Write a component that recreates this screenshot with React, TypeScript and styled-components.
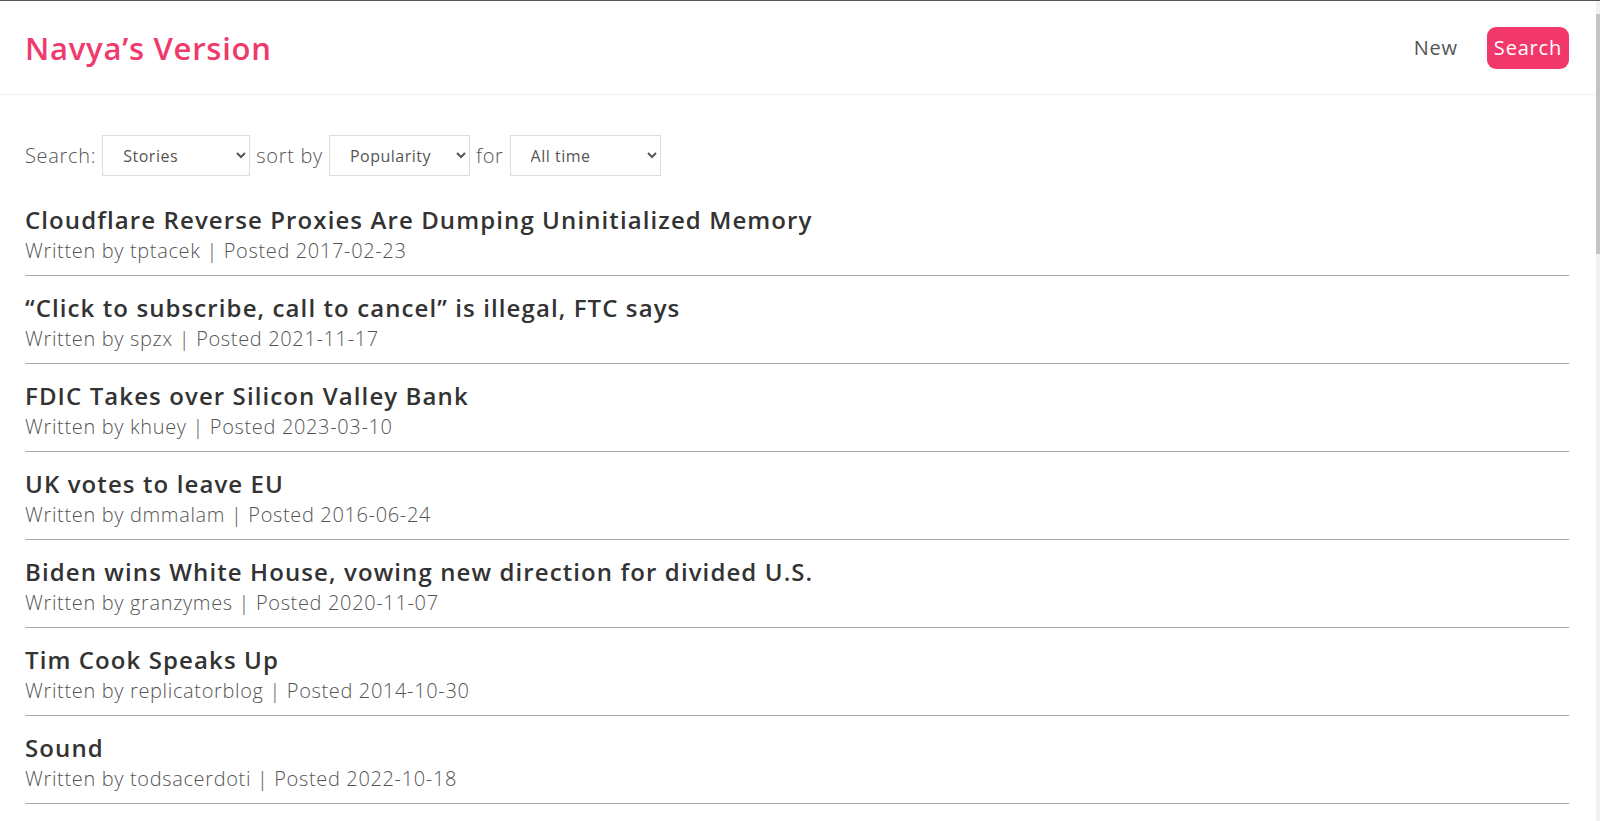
import React from 'react';
import styled, { createGlobalStyle } from 'styled-components';

const GlobalStyle = createGlobalStyle`
  html, body {
    margin: 0;
    padding: 0;
    background: #ffffff;
    font-family: "Open Sans", Lato, sans-serif;
  }

  body {
    border-top: 1px solid #555;
  }
`;

// thin scrollbar strip seen on the right edge of the screenshot
const ScrollTrack = styled.div`
  position: fixed;
  top: 1px;
  right: 0;
  bottom: 0;
  width: 4px;
  background: #f1f1f1;
`;

const ScrollThumb = styled.div`
  margin-top: 13px;
  height: 240px;
  background: #c4c4c4;
`;

const Header = styled.header`
  display: flex;
  align-items: center;
  justify-content: space-between;
  height: 93px;
  padding: 0 27px 0 25px;
  margin-right: 4px;
  border-bottom: 1px solid #f0f0f0;
`;

const Brand = styled.h1`
  margin: 0;
  font-size: 31px;
  font-weight: 600;
  letter-spacing: 0.75px;
  color: #ef3a6c;
`;

const Nav = styled.nav`
  display: flex;
  align-items: center;
  gap: 29px;
`;

const NavLink = styled.a<{ $active?: boolean }>`
  font-size: 20px;
  line-height: 42px;
  letter-spacing: 0.8px;
  padding: 0 ${(p) => (p.$active ? '7px' : '0')};
  border-radius: 9px;
  color: ${(p) => (p.$active ? '#ffffff' : '#555555')};
  background: ${(p) => (p.$active ? '#f2386b' : 'transparent')};
  text-decoration: none;
  cursor: pointer;
`;

const Main = styled.main`
  padding: 40px 31px 0 25px;
`;

const Filters = styled.div`
  display: flex;
  align-items: center;
  gap: 6px;
  height: 41px;
  margin-bottom: 12px;
  font-size: 20px;
  font-weight: 300;
  letter-spacing: 0.7px;
  color: #555;
`;

const Select = styled.select<{ $w: number }>`
  width: ${(p) => p.$w}px;
  height: 41px;
  padding: 0 8px 0 16px;
  font-family: "Open Sans", Lato, sans-serif;
  font-size: 16px;
  letter-spacing: 0.5px;
  color: #555;
  background: #fff;
  border: 1px solid #dddddd;
  border-radius: 0;
  outline: none;
`;

const List = styled.ul`
  list-style: none;
  margin: 0;
  padding: 0;
`;

const Item = styled.li`
  padding: 17px 0 10px;
  border-bottom: 1px solid #aaaaaa;
`;

const Title = styled.a`
  display: block;
  font-size: 24px;
  line-height: 30px;
  font-weight: 600;
  letter-spacing: 1.1px;
  color: #333;
  text-decoration: none;
`;

const Meta = styled.div`
  margin-top: 2px;
  font-size: 20px;
  line-height: 28px;
  font-weight: 300;
  letter-spacing: 0.65px;
  color: #555;
`;

const stories = [
  ['Cloudflare Reverse Proxies Are Dumping Uninitialized Memory', 'tptacek', '2017-02-23'],
  ['\u201CClick to subscribe, call to cancel\u201D is illegal, FTC says', 'spzx', '2021-11-17'],
  ['FDIC Takes over Silicon Valley Bank', 'khuey', '2023-03-10'],
  ['UK votes to leave EU', 'dmmalam', '2016-06-24'],
  ['Biden wins White House, vowing new direction for divided U.S.', 'granzymes', '2020-11-07'],
  ['Tim Cook Speaks Up', 'replicatorblog', '2014-10-30'],
  ['Sound', 'todsacerdoti', '2022-10-18'],
  ['Steve Jobs has passed away', 'patricktomas', '2011-10-05'],
  ['Mechanical Watch', 'todsacerdoti', '2022-05-04'],
  ['Google Search Is Dying', 'dbrereton', '2022-02-15'],
  ['A Message to Our Customers', 'epaga', '2016-02-17'],
  ['Bram Moolenaar has died', 'wufocaculura', '2023-08-05'],
  ['Is the Fed too powerful?', 'lxm', '2021-07-22'],
  ['Switzerland votes for universal basic income', 'jrs235', '2016-06-05'],
  ['Show HN: This up votes itself', 'olalonde', '2016-02-09'],
  ['Reflecting on one very, very strange year at Uber', 'grey-area', '2017-02-19'],
  ['Apple Vision Pro', 'samwillis', '2023-06-05'],
  ['Elon Musk buys Twitter', 'jbegley', '2022-10-28'],
  ['GPT-4', 'e0m', '2023-03-14'],
  ['Windows 11 and the end of an era', 'kunley', '2021-06-25'],
  ['Ask HN: What are you working on?', 'david927', '2019-09-15'],
  ['Firefox Quantum', 'ashrust', '2017-11-14'],
  ['Signal is now available on desktop', 'tosh', '2017-10-31'],
  ['Rust 1.0', 'steveklabnik', '2015-05-15'],
  ['Tesla Model 3 unveiled', 'danso', '2016-03-31'],
  ['Ask HN: Who is hiring?', 'whoishiring', '2018-03-01'],
  ['Firebase is joining Google', 'jamesjyu', '2014-10-21'],
  ['The Pirate Bay is down', 'sebg', '2014-12-09'],
  ['GitHub Copilot', 'todsacerdoti', '2021-06-29'],
  ['Linux kernel 4.0 released', 'jeff_carr', '2015-04-12'],
];

export default function App() {
  return (
    <>
      <GlobalStyle />
      <ScrollTrack>
        <ScrollThumb />
      </ScrollTrack>
      <Header>
        <Brand>Navya&rsquo;s Version</Brand>
        <Nav>
          <NavLink>New</NavLink>
          <NavLink $active>Search</NavLink>
        </Nav>
      </Header>
      <Main>
        <Filters>
          <span>Search:</span>
          <Select $w={148} defaultValue="stories">
            <option value="stories">Stories</option>
            <option value="comments">Comments</option>
          </Select>
          <span>sort by</span>
          <Select $w={141} defaultValue="popularity">
            <option value="popularity">Popularity</option>
            <option value="date">Date</option>
          </Select>
          <span>for</span>
          <Select $w={151} defaultValue="all">
            <option value="all">All time</option>
            <option value="day">Last 24h</option>
            <option value="week">Past week</option>
          </Select>
        </Filters>
        <List>
          {stories.map(([title, author, date]) => (
            <Item key={title}>
              <Title>{title}</Title>
              <Meta>
                Written by {author} | Posted {date}
              </Meta>
            </Item>
          ))}
        </List>
      </Main>
    </>
  );
}
